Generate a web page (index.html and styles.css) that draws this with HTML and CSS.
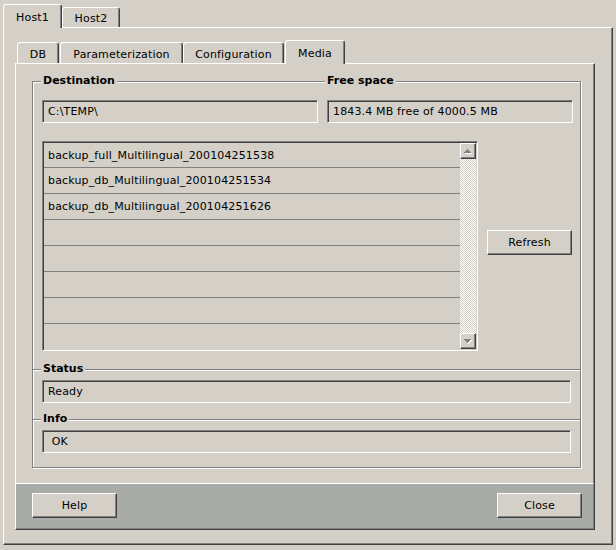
FILE: index.html
```
<!DOCTYPE html>
<html>
<head>
<meta charset="utf-8">
<link rel="stylesheet" href="styles.css">
</head>
<body>
<div class="window">
  <div class="tabs outer-tabs">
    <div class="tab sel host1">Host1</div>
    <div class="tab host2">Host2</div>
  </div>
  <div class="outer-panel">
    <div class="tabs inner-tabs">
      <div class="tab t-db">DB</div>
      <div class="tab t-param">Parameterization</div>
      <div class="tab t-config">Configuration</div>
      <div class="tab sel t-media">Media</div>
    </div>
    <div class="inner-panel">
      <div class="group">
        <div class="top">
          <div class="glabel l-dest">Destination</div>
          <div class="glabel l-free">Free space</div>
          <div class="field">C:\TEMP\</div>
          <div class="field">1843.4 MB free of 4000.5 MB</div>
        </div>
        <div class="mid">
          <div class="list">
            <div class="rows">
              <div class="row">backup_full_Multilingual_200104251538</div>
              <div class="row">backup_db_Multilingual_200104251534</div>
              <div class="row">backup_db_Multilingual_200104251626</div>
              <div class="row"></div>
              <div class="row"></div>
              <div class="row"></div>
              <div class="row"></div>
              <div class="row"></div>
            </div>
            <div class="scroll">
              <div class="sbtn">
                <svg width="8" height="5" viewBox="0 0 8 5" shape-rendering="crispEdges">
                  <rect x="4" y="1" width="1" height="1" fill="#fff"/>
                  <rect x="3" y="2" width="3" height="1" fill="#fff"/>
                  <rect x="2" y="3" width="5" height="1" fill="#fff"/>
                  <rect x="1" y="4" width="7" height="1" fill="#fff"/>
                  <rect x="3" y="0" width="1" height="1" fill="#808080"/>
                  <rect x="2" y="1" width="3" height="1" fill="#808080"/>
                  <rect x="1" y="2" width="5" height="1" fill="#808080"/>
                  <rect x="0" y="3" width="7" height="1" fill="#808080"/>
                </svg>
              </div>
              <div class="track"></div>
              <div class="sbtn">
                <svg width="8" height="5" viewBox="0 0 8 5" shape-rendering="crispEdges">
                  <rect x="1" y="1" width="7" height="1" fill="#fff"/>
                  <rect x="2" y="2" width="5" height="1" fill="#fff"/>
                  <rect x="3" y="3" width="3" height="1" fill="#fff"/>
                  <rect x="4" y="4" width="1" height="1" fill="#fff"/>
                  <rect x="0" y="0" width="7" height="1" fill="#808080"/>
                  <rect x="1" y="1" width="5" height="1" fill="#808080"/>
                  <rect x="2" y="2" width="3" height="1" fill="#808080"/>
                  <rect x="3" y="3" width="1" height="1" fill="#808080"/>
                </svg>
              </div>
            </div>
          </div>
          <div class="btn refresh">Refresh</div>
        </div>
        <div class="sep"><div class="glabel">Status</div></div>
        <div class="field wide">Ready</div>
        <div class="sep"><div class="glabel">Info</div></div>
        <div class="field wide"> OK</div>
      </div>
      <div class="bar">
        <div class="btn bbtn">Help</div>
        <div class="btn bbtn">Close</div>
      </div>
    </div>
  </div>
</div>
</body>
</html>
```
FILE: styles.css
```
* { box-sizing: border-box; }

body {
  margin: 0;
  width: 616px;
  height: 550px;
  overflow: hidden;
  background: #d4d0c8;
  font-family: "DejaVu Sans", sans-serif;
  font-size: 11px;
  letter-spacing: 0.15px;
  color: #000;
}

.window {
  padding-left: 3px;
}

.tabs {
  display: flex;
  align-items: flex-end;
}

.tab {
  border: 1px solid;
  border-bottom: none;
  border-color: #fff #404040 #404040 #fff;
  box-shadow: inset -1px 0 #808080;
  border-radius: 3px 3px 0 0;
  background: #d4d0c8;
  display: flex;
  align-items: center;
  justify-content: center;
  padding-top: 1px;
  white-space: nowrap;
}

.tab.sel {
  position: relative;
  z-index: 1;
  margin-bottom: -1px;
}

.outer-tabs {
  margin-top: 4px;
  height: 23px;
}

.host1 { width: 59px; height: 24px; }
.host2 { width: 58px; height: 20px; padding-top: 2px; }

.outer-panel {
  width: 610px;
  height: 518px;
  border: 1px solid;
  border-color: #fff #404040 #404040 #fff;
  box-shadow: inset -1px -1px #808080;
  padding-left: 11px;
}

.inner-tabs {
  margin-top: 12px;
  padding-left: 2px;
  height: 23px;
}

.t-db { width: 42px; height: 21px; padding-top: 2px; }
.t-param { width: 123px; height: 21px; margin-left: 1px; padding-top: 2px; }
.t-config { width: 101px; height: 21px; padding-top: 2px; }
.t-media { width: 60px; height: 24px; margin-left: 1px; }

.inner-panel {
  width: 580px;
  height: 467px;
  border: 1px solid;
  border-color: #fff #404040 #404040 #fff;
  box-shadow: inset -1px -1px #808080;
  display: flex;
  flex-direction: column;
}

.group {
  margin: 17px 0 0 16px;
  width: 549px;
  height: 387px;
  flex: none;
  border: 1px solid #808080;
  box-shadow: inset 1px 1px #fff, 1px 1px #fff;
  padding: 0 7px 0 9px;
}

.top {
  display: grid;
  grid-template-columns: 276px 246px;
  column-gap: 9px;
  row-gap: 12px;
}

.glabel {
  font-weight: bold;
  letter-spacing: 0;
  line-height: 14px;
  height: 14px;
  margin-top: -8px;
  padding: 0 2px;
  background: #d4d0c8;
  justify-self: start;
  white-space: nowrap;
}

.l-dest { margin-left: -1px; }
.l-free { margin-left: -2px; }

.field {
  height: 23px;
  border: 1px solid;
  border-color: #808080 #fff #fff #808080;
  box-shadow: inset 1px 1px #404040;
  padding-left: 5px;
  display: flex;
  align-items: center;
  white-space: pre;
}

.field.wide {
  margin-right: 2px;
}

.mid {
  display: flex;
  align-items: flex-start;
  margin-top: 18px;
  height: 210px;
}

.list {
  width: 436px;
  height: 210px;
  flex: none;
  border: 1px solid;
  border-color: #808080 #fff #fff #808080;
  box-shadow: inset 1px 1px #404040;
  padding: 1px;
  display: flex;
}

.rows {
  width: 416px;
}

.row {
  height: 26px;
  border-bottom: 1px solid #808080;
  padding-left: 4px;
  display: flex;
  align-items: center;
  white-space: nowrap;
}

.row:first-child { height: 25px; }
.row:last-child { height: 25px; border-bottom: none; }

.scroll {
  width: 16px;
  display: flex;
  flex-direction: column;
}

.sbtn {
  height: 16px;
  flex: none;
  border: 1px solid;
  border-color: #fff #404040 #404040 #fff;
  box-shadow: inset -1px -1px #808080;
  background: #d4d0c8;
  display: flex;
  align-items: center;
  justify-content: center;
}

.sbtn svg { display: block; }

.track {
  flex: 1;
  background: repeating-conic-gradient(#d4d0c8 0 25%, #fff 0 50%) 0 0 / 2px 2px;
}

.btn {
  border: 1px solid;
  border-color: #fff #404040 #404040 #fff;
  box-shadow: inset -1px -1px #808080;
  background: #d4d0c8;
  display: flex;
  align-items: center;
  justify-content: center;
}

.refresh {
  width: 85px;
  height: 25px;
  margin: 89px 0 0 9px;
}

.sep {
  margin: 18px -7px 0 -9px;
  border-top: 1px solid #808080;
  box-shadow: inset 0 1px #fff;
  padding-left: 9px;
  display: flex;
}

.sep .glabel { margin-left: -1px; }

.sep + .field { margin-top: 4px; }
.field + .sep { margin-top: 16px; }

.bar {
  margin-top: 15px;
  height: 46px;
  flex: none;
  border-top: 1px solid #fff;
  border-right: 1px solid #808080;
  border-bottom: 1px solid #808080;
  background: #a9aba7;
  padding: 9px 11px 0 16px;
  display: flex;
  justify-content: space-between;
  align-items: flex-start;
}

.bbtn {
  width: 85px;
  height: 25px;
}
```
